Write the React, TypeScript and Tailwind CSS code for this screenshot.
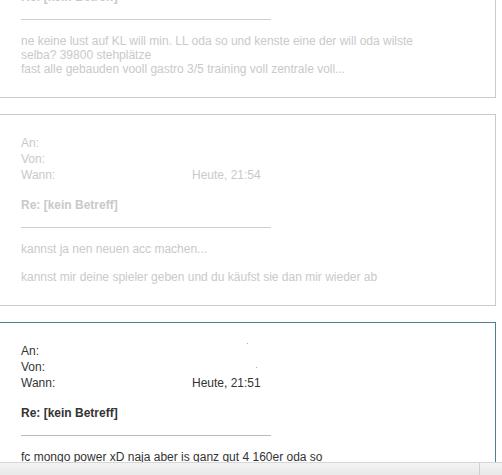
import type { ReactNode } from 'react'

interface Message {
  time: string
  subject: string
  body: ReactNode
  active?: boolean
  marks?: boolean
}

const messages: Message[] = [
  {
    time: 'Heute, 21:58',
    subject: 'Re: [kein Betreff]',
    body: (
      <p>
        ne keine lust auf KL will min. LL oda so und kenste eine der will oda wilste
        <br />
        selba? 39800 stehplätze
        <br />
        fast alle gebauden vooll gastro 3/5 training voll zentrale voll...
      </p>
    ),
  },
  {
    time: 'Heute, 21:54',
    subject: 'Re: [kein Betreff]',
    body: (
      <>
        <p>kannst ja nen neuen acc machen...</p>
        <p className="mt-[14px]">kannst mir deine spieler geben und du käufst sie dan mir wieder ab</p>
      </>
    ),
  },
  {
    time: 'Heute, 21:51',
    subject: 'Re: [kein Betreff]',
    body: <p>fc mongo power xD naja aber is ganz gut 4 160er oda so</p>,
    active: true,
    marks: true,
  },
]

const MessageCard = ({ msg, className }: { msg: Message; className?: string }) => {
  const tone = msg.active ? 'border-[#4d7f96] text-[#333]' : 'border-[#cbcbcb] text-[#c9c9c9]'
  return (
    <div className={`w-[496px] border border-l-0 bg-white pl-[21px] pt-[20px] pb-[21px] ${tone} ${className ?? ''}`}>
      <div className="grid grid-cols-[171px_1fr] leading-[16px]">
        <span>An:</span>
        <span>{msg.marks && <span className="ml-[55px] inline-block h-px w-px bg-[#aaa] align-top" />}</span>
        <span>Von:</span>
        <span>{msg.marks && <span className="ml-[64px] inline-block h-px w-px bg-[#aaa] align-middle" />}</span>
        <span>Wann:</span>
        <span>{msg.time}</span>
      </div>
      <div className="mt-[14px] font-bold leading-[16px]">{msg.subject}</div>
      <div className={`mt-[14px] h-px w-[250px] ${msg.active ? 'bg-[#bcbcbc]' : 'bg-[#cfcfcf]'}`} />
      <div className="mt-[14px] leading-[14px]">{msg.body}</div>
    </div>
  )
}

const App = () => {
  return (
    <div className="relative h-[475px] overflow-hidden bg-white font-['Liberation_Sans',Arial,sans-serif] text-[12px]">
      <div className="flex flex-col gap-[16px]">
        {messages.map((m, i) => (
          <MessageCard key={i} msg={m} className={i === 0 ? '-mt-[94px]' : ''} />
        ))}
      </div>
      <div className="fixed bottom-0 left-0 right-0 flex h-[13px] justify-end border-t border-[#d6d6d6] bg-gradient-to-b from-[#f3f3f3] to-[#e9e9e9]">
        <div className="mr-[22px] h-full w-px bg-[#cfcfcf]" />
      </div>
    </div>
  )
}

export default App
